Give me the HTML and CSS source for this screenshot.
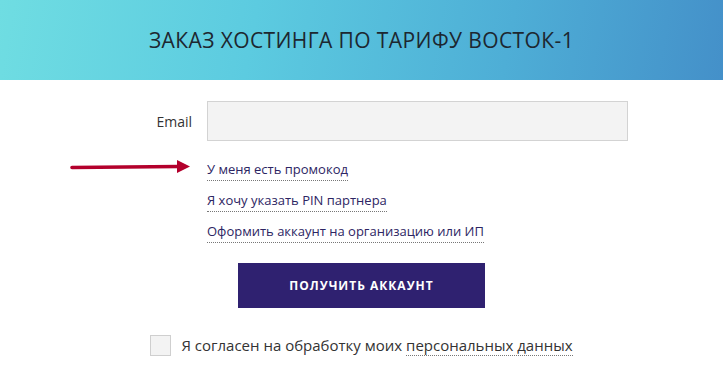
FILE: index.html
```html
<!DOCTYPE html>
<html lang="ru">
<head>
<meta charset="utf-8">
<link rel="stylesheet" href="styles.css">
</head>
<body>
<header class="hero">
  <h1 class="hero__title">ЗАКАЗ ХОСТИНГА ПО ТАРИФУ ВОСТОК-1</h1>
</header>
<main class="form">
  <div class="form__row">
    <label class="form__label" for="email">Email</label>
    <input class="form__input" id="email" type="text">
  </div>
  <div class="form__links">
    <div class="form__link-wrap">
      <svg class="arrow" width="124" height="16" viewBox="0 0 124 16">
        <path d="M3 8.5 L110 7.5" stroke="#b3002c" stroke-width="3.6" stroke-linecap="round" fill="none"/>
        <path d="M108 1 L121 7.5 L108 14 Z" fill="#b3002c"/>
      </svg>
      <a class="form__link" href="#">У меня есть промокод</a>
    </div>
    <div class="form__link-wrap"><a class="form__link" href="#">Я хочу указать PIN партнера</a></div>
    <div class="form__link-wrap"><a class="form__link" href="#">Оформить аккаунт на организацию или ИП</a></div>
  </div>
  <div class="form__actions">
    <button class="btn" type="button">ПОЛУЧИТЬ АККАУНТ</button>
  </div>
  <div class="agree">
    <span class="agree__box"></span>
    <span class="agree__text">Я согласен на обработку моих <a class="agree__link" href="#">персональных данных</a></span>
  </div>
</main>
</body>
</html>
```

FILE: styles.css
```css
* { box-sizing: border-box; }
body {
  margin: 0;
  font-family: "Open Sans", "Liberation Sans", sans-serif;
  background: #fff;
  color: #333;
}
.hero {
  height: 80px;
  display: flex;
  align-items: center;
  justify-content: center;
  background: linear-gradient(100deg, #6fdde2 0%, #5ccbe0 35%, #4eaed6 70%, #4490c9 100%);
}
.hero__title {
  margin: 0;
  font-family: "Open Sans", sans-serif;
  font-weight: 400;
  font-size: 21px;
  letter-spacing: 0.4px;
  color: #1d2730;
}
.form {
  display: flex;
  flex-direction: column;
  padding-top: 21px;
}
.form__row {
  display: grid;
  grid-template-columns: 192px 421px;
  column-gap: 15px;
  align-items: center;
}
.form__label {
  text-align: right;
  font-size: 14px;
  color: #333;
}
.form__input {
  height: 40px;
  background: #f3f3f3;
  border: 1px solid #d3d3d3;
  border-radius: 0;
  outline: none;
}
.form__links {
  display: flex;
  flex-direction: column;
  padding-left: 207px;
  padding-top: 16px;
  gap: 10px;
}
.form__link-wrap {
  position: relative;
  height: 21px;
}
.form__link {
  font-size: 13px;
  color: #2d2563;
  text-decoration: none;
  border-bottom: 1px dotted #777;
  padding-bottom: 2px;
  line-height: 18px;
  display: inline-block;
}
.arrow {
  position: absolute;
  left: -138px;
  top: 2px;
}
.form__actions {
  display: flex;
  justify-content: center;
  padding-top: 23px;
}
.btn {
  width: 247px;
  height: 45px;
  background: #2f2170;
  color: #fff;
  border: none;
  font-family: "Open Sans", sans-serif;
  font-weight: 700;
  font-size: 12px;
  letter-spacing: 1px;
  cursor: pointer;
}
.agree {
  display: flex;
  justify-content: center;
  align-items: center;
  gap: 10px;
  padding-top: 27px;
}
.agree__box {
  width: 21px;
  height: 21px;
  background: #f3f3f3;
  border: 1px solid #cfcfcf;
}
.agree__text {
  font-size: 15px;
  line-height: 20px;
  color: #333;
}
.agree__link {
  display: inline-block;
  color: #333;
  text-decoration: none;
  line-height: 18px;
  padding-bottom: 1px;
  border-bottom: 1px dotted #777;
}
```
